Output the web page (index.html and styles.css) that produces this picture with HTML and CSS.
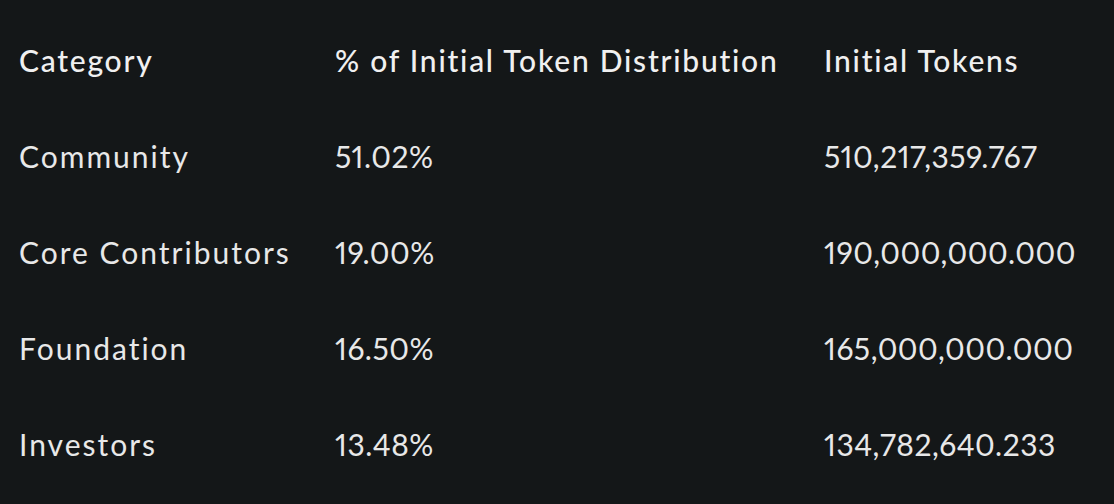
FILE: index.html
```html
<!DOCTYPE html>
<html>
<head>
<meta charset="utf-8">
<link rel="stylesheet" href="styles.css">
</head>
<body>
<div class="table">
  <div class="row head">
    <div class="cell">Category</div>
    <div class="cell">% of Initial Token Distribution</div>
    <div class="cell">Initial Tokens</div>
  </div>
  <div class="row">
    <div class="cell">Community</div>
    <div class="cell num">51.02%</div>
    <div class="cell num">510,217,359.767</div>
  </div>
  <div class="row">
    <div class="cell">Core Contributors</div>
    <div class="cell num">19.00%</div>
    <div class="cell num">190,000,000.000</div>
  </div>
  <div class="row">
    <div class="cell">Foundation</div>
    <div class="cell num">16.50%</div>
    <div class="cell num">165,000,000.000</div>
  </div>
  <div class="row">
    <div class="cell">Investors</div>
    <div class="cell num">13.48%</div>
    <div class="cell num">134,782,640.233</div>
  </div>
</div>
</body>
</html>
```

FILE: styles.css
```css
html, body {
  margin: 0;
  padding: 0;
  background: #141718;
}
body {
  font-family: Lato, "Noto Sans", sans-serif;
  color: #e8e8e8;
  width: 1114px;
  height: 504px;
  overflow: hidden;
}
.table {
  display: flex;
  flex-direction: column;
  padding: 12px 0 0 19px;
}
.row {
  display: grid;
  grid-template-columns: 316px 489px 1fr;
  height: 96px;
  align-items: center;
  font-size: 30px;
  line-height: 36px;
  letter-spacing: 2px;
  font-variant-ligatures: none;
}
.head {
  font-weight: 500;
  letter-spacing: 1.75px;
  color: #f0f0f0;
}
.num {
  font-variant-numeric: proportional-nums;
  letter-spacing: 0.5px;
}
```
